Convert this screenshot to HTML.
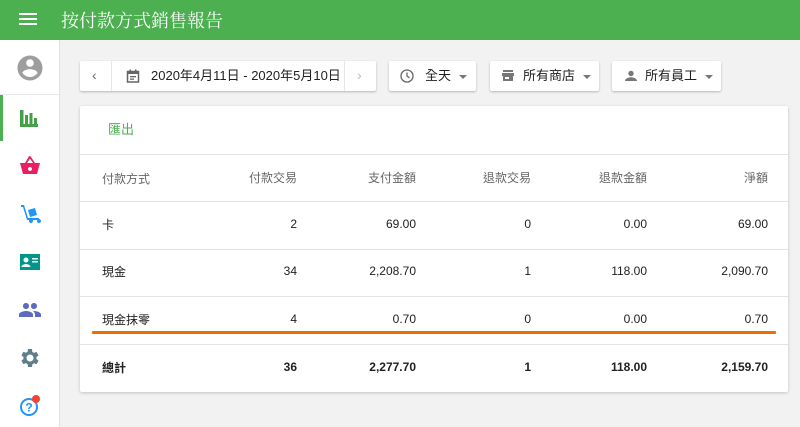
<!DOCTYPE html>
<html><head><meta charset="utf-8"><style>
*{box-sizing:border-box;margin:0;padding:0}
body{width:800px;height:427px;overflow:hidden;background:#f2f2f2;font-family:"Liberation Sans","Noto Sans CJK TC",sans-serif;position:relative;color:#212121}
.hdr{position:absolute;left:0;top:0;width:800px;height:40px;background:#4caf50;color:#fff}
.hdr .t{position:absolute;left:61px;top:7px;font-size:18px;font-family:"Noto Serif CJK SC","Noto Sans CJK TC",serif}
.side{position:absolute;left:0;top:40px;width:60px;height:387px;background:#fff;border-right:1px solid #e0e0e0}
.ic{position:absolute;left:18px;width:24px;height:24px}
.box{position:absolute;top:61px;height:30px;background:#fff;box-shadow:0 1px 2px rgba(0,0,0,.25);border-radius:2px;font-size:13px;line-height:30px}
.card{position:absolute;left:80px;top:106px;width:708px;height:286px;background:#fff;box-shadow:0 1px 3px rgba(0,0,0,.2);border-radius:2px}
.ln{position:absolute;left:0;width:708px;height:1px;background:#e3e3e3}
.r{position:absolute;font-size:12px;color:#212121;line-height:14px}
.c{margin-top:1px}
.h{color:#666}
.b{font-weight:bold}
.car{display:inline-block;border-left:4px solid transparent;border-right:4px solid transparent;border-top:4px solid #777;vertical-align:middle;margin-left:8px}
</style></head><body>
<div class="hdr">
<svg style="position:absolute;left:19px;top:12px" width="18" height="14"><rect y="1" width="18" height="2" fill="#fff"/><rect y="6" width="18" height="2" fill="#fff"/><rect y="11" width="18" height="2" fill="#fff"/></svg>
<div class="t">按付款方式銷售報告</div></div>
<div class="side">
<div style="position:absolute;left:0;top:54px;width:60px;height:1px;background:#e8e8e8"></div>
<div style="position:absolute;left:0;top:55px;width:3px;height:46px;background:#4caf50"></div>
<svg class="ic" style="top:13px;left:15px;width:30px;height:30px" viewBox="0 0 24 24"><path fill="#9e9e9e" d="M12 2C6.5 2 2 6.5 2 12s4.5 10 10 10 10-4.5 10-10S17.5 2 12 2zm0 3c1.7 0 3 1.3 3 3s-1.3 3-3 3-3-1.3-3-3 1.3-3 3-3zm0 14.2c-2.5 0-4.7-1.3-6-3.2 0-2 4-3.1 6-3.1s6 1.1 6 3.1c-1.3 1.9-3.5 3.2-6 3.2z"/></svg>
<svg class="ic" style="top:68px;left:19px;width:20px;height:20px" viewBox="0 0 20 20"><path fill="#43a047" d="M1 2h3.5v16H1zM6 7h3v11H6zM10.5 5h3v13h-3zM15 10h3v8h-3zM1 16h18v3H1z"/></svg>
<svg class="ic" style="top:114px" viewBox="0 0 24 24"><path fill="#e91e63" d="M17 9l-4.4-6.6c-.4-.6-1.2-.6-1.6 0L7 9H2l3 11h14l3-11h-5zM9 9l3-4.4L15 9H9zm3 8c-1.1 0-2-.9-2-2s.9-2 2-2 2 .9 2 2-.9 2-2 2z"/></svg>
<svg class="ic" style="top:162px" viewBox="0 0 24 24"><path fill="#2196f3" d="M3 3h3l4 13h11v2H9L5 5H3zM10 8l7-2 2 7-7 2zM11 19a2 2 0 110 .1zM19 19a2 2 0 110 .1z"/></svg>
<svg class="ic" style="top:210px" viewBox="0 0 24 24"><path fill="#009688" d="M2 4h20v16H2z"/><circle cx="8" cy="10" r="2.5" fill="#fff"/><path fill="#fff" d="M3.5 17c0-2 3-3 4.5-3s4.5 1 4.5 3zM14 8h6v1.5h-6zM14 11h6v1.5h-6z"/></svg>
<svg class="ic" style="top:258px" viewBox="0 0 24 24"><path fill="#5c6bc0" d="M16 11c1.7 0 3-1.3 3-3s-1.3-3-3-3-3 1.3-3 3 1.3 3 3 3zm-8 0c1.7 0 3-1.3 3-3S9.7 5 8 5 5 6.3 5 8s1.3 3 3 3zm0 2c-2.3 0-7 1.2-7 3.5V19h14v-2.5C15 14.2 10.3 13 8 13zm8 0c-.3 0-.6 0-1 .1 1.2.8 2 2 2 3.4V19h6v-2.5c0-2.3-4.7-3.5-7-3.5z"/></svg>
<svg class="ic" style="top:306px" viewBox="0 0 24 24"><path fill="#607d8b" d="M19.4 13c0-.3.1-.6.1-1s0-.7-.1-1l2.1-1.6-2-3.5-2.5 1c-.5-.4-1.1-.7-1.7-1L15 3h-4l-.4 2.7c-.6.3-1.2.6-1.7 1l-2.5-1-2 3.5L6.5 11c0 .3-.1.6-.1 1s0 .7.1 1l-2.1 1.6 2 3.5 2.5-1c.5.4 1.1.7 1.7 1L11 21h4l.4-2.7c.6-.3 1.2-.6 1.7-1l2.5 1 2-3.5L19.4 13zM13 15.5c-1.9 0-3.5-1.6-3.5-3.5S11.1 8.5 13 8.5s3.5 1.6 3.5 3.5-1.6 3.5-3.5 3.5z" transform="translate(-1 0)"/></svg>
<svg class="ic" style="top:354px" viewBox="0 0 24 24"><circle cx="11" cy="13" r="8" fill="none" stroke="#2196f3" stroke-width="2"/><text x="11" y="17.5" font-size="12" font-weight="bold" fill="#2196f3" text-anchor="middle" font-family="Liberation Sans">?</text><circle cx="18" cy="5" r="4" fill="#f44336"/></svg>
</div>

<div class="box" style="left:80px;width:296px">
<div style="position:absolute;left:31px;top:0;width:1px;height:30px;background:#e6e6e6"></div>
<div style="position:absolute;left:264px;top:0;width:1px;height:30px;background:#e6e6e6"></div>
<span style="position:absolute;left:12px;top:-1px;color:#666;font-size:14px">‹</span>
<span style="position:absolute;left:277px;top:-1px;color:#bbb;font-size:14px">›</span>
<svg style="position:absolute;left:46px;top:8px" width="14" height="14" viewBox="0 0 14 14"><rect x="1.5" y="2.5" width="11" height="10.5" fill="none" stroke="#666" stroke-width="1.5"/><rect x="1" y="2" width="12" height="3" fill="#666"/><rect x="3.5" y="0.5" width="1.5" height="3" fill="#666"/><rect x="9" y="0.5" width="1.5" height="3" fill="#666"/><rect x="4" y="7" width="6" height="1.3" fill="#666"/><rect x="4" y="9.5" width="4" height="1.3" fill="#666"/></svg>
<span style="position:absolute;left:71px;top:0">2020年4月11日 - 2020年5月10日</span></div>
<div class="box" style="left:389px;width:87px">
<svg style="position:absolute;left:11px;top:8px" width="14" height="14" viewBox="0 0 14 14"><circle cx="7" cy="7" r="6" fill="none" stroke="#666" stroke-width="1.3"/><path d="M7 3.5V7l2.5 2" stroke="#666" stroke-width="1.3" fill="none"/></svg>
<span style="position:absolute;left:36px">全天<span class="car"></span></span></div>
<div class="box" style="left:490px;width:109px">
<svg style="position:absolute;left:12px;top:9px" width="12" height="11" viewBox="0 0 12 11"><rect x="1" y="0" width="10" height="2" fill="#777"/><rect x="0" y="3" width="12" height="3" fill="#777"/><rect x="1" y="6" width="10" height="5" fill="#777"/><rect x="3" y="7" width="4" height="2" fill="#fff"/></svg>
<span style="position:absolute;left:33px">所有商店<span class="car"></span></span></div>
<div class="box" style="left:612px;width:109px">
<svg style="position:absolute;left:13px;top:9px" width="12" height="12" viewBox="0 0 12 12"><circle cx="6" cy="3.5" r="2.7" fill="#777"/><path d="M0 11c0-2.7 4-3.7 6-3.7s6 1 6 3.7z" fill="#777"/></svg>
<span style="position:absolute;left:33px">所有員工<span class="car"></span></span></div>

<div class="card">
<div class="r" style="left:28px;top:17px;color:#4caf50;font-size:13px">匯出</div>
<div class="ln" style="top:48px"></div>
<div class="ln" style="top:95px"></div>
<div class="ln" style="top:143px"></div>
<div class="ln" style="top:190px"></div>
<div class="ln" style="top:238px"></div>
<div style="position:absolute;left:12px;top:225px;width:684px;height:3px;background:#ef6c00;border-radius:1px"></div>
</div>
<div id="tbl"></div>
<script>
var rows=[["付款方式","付款交易","支付金額","退款交易","退款金額","淨額"],["卡","2","69.00","0","0.00","69.00"],["現金","34","2,208.70","1","118.00","2,090.70"],["現金抹零","4","0.70","0","0.00","0.70"],["總計","36","2,277.70","1","118.00","2,159.70"]];
var ys=[171,217,264,312,360],xr=[297,416,531,647,768],h="";
rows.forEach(function(r,i){var c=i==0?"r h":(i==4?"r b":"r");
h+='<div class="'+c+' c" style="left:102px;top:'+ys[i]+'px">'+r[0]+'</div>';
for(var j=1;j<6;j++)h+='<div class="'+c+'" style="right:'+(800-xr[j-1])+'px;top:'+ys[i]+'px">'+r[j]+'</div>';});
document.getElementById("tbl").innerHTML=h;
</script>
</body></html>
